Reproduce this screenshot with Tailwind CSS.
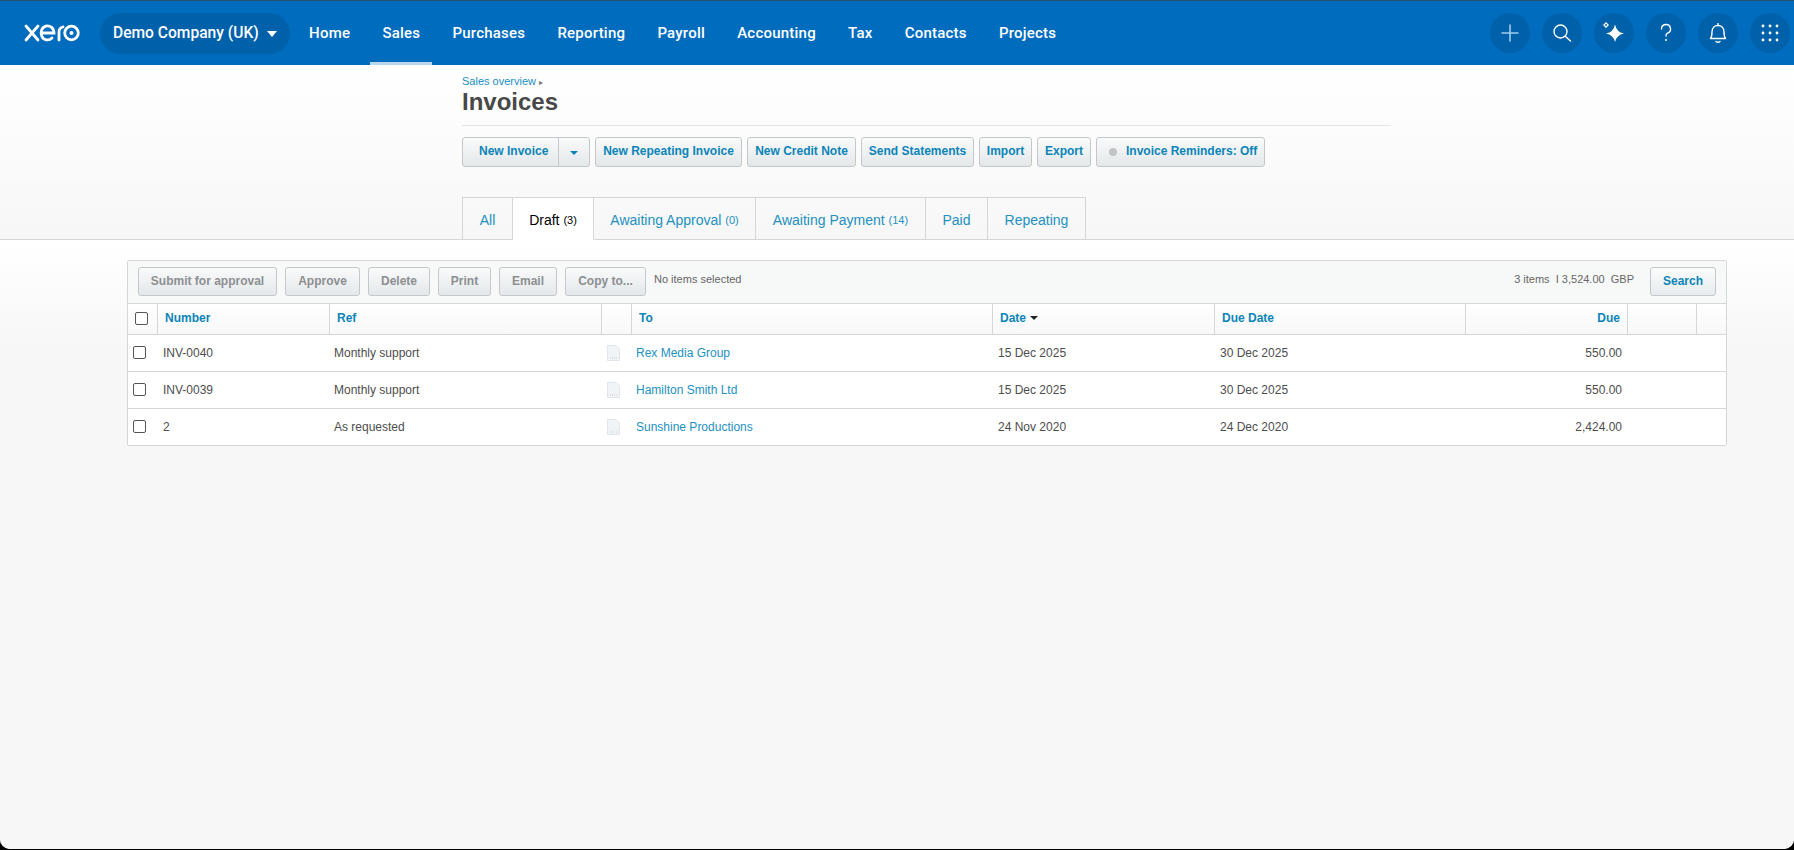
<!DOCTYPE html>
<html lang="en">
  <head>
    <meta charset="UTF-8" />
    <title>Invoices</title>
    <script src="https://cdn.jsdelivr.net/npm/@tailwindcss/browser@4"></script>
  </head>
  <body class="bg-black font-['Liberation_Sans',Arial,sans-serif] text-[#444]">
    <div class="h-[849px] w-[1794px] overflow-hidden rounded-b-[10px] bg-[#f7f7f7] flex flex-col">
      <!-- top nav -->
      <header class="h-[65px] shrink-0 bg-[#006cbe] border-t border-[#2d4f70] flex items-center pl-[24px] pr-[4px] text-white font-['Roboto',sans-serif]">
        <svg class="w-[56px] h-[22px] shrink-0" viewBox="0 0 56 22" fill="none" stroke="white" stroke-width="2.800" stroke-linecap="round">
          <path d="M2 4 L14 18 M14 4 L2 18" />
          <path d="M18 11 H30 A6.500 7 0 1 0 28 16" />
          <path d="M35 18 V10 A5 5 0 0 1 39 5" />
          <circle cx="47.500" cy="11" r="6.800" />
          <circle cx="47.500" cy="11" r="2" fill="white" stroke="none" />
        </svg>
        <div class="ml-[20px] h-[41px] w-[190px] shrink-0 rounded-full bg-[#0061ab] flex items-center pl-[13px] pt-[1px] text-[15.600px] font-medium">
          Demo Company (UK)
          <span class="ml-[8px] w-0 h-0 border-x-[5.500px] border-x-transparent border-t-[6px] border-t-white"></span>
        </div>
        <nav class="ml-[3px] flex h-full text-[15px] font-medium tracking-[0.22px]">
          <a class="px-[16.100px] pt-[1px] flex items-center">Home</a>
          <a class="relative px-[16.100px] pt-[1px] flex items-center">Sales<span class="absolute left-[4px] right-[4px] bottom-0 h-[3px] bg-[#b9d7ef]"></span></a>
          <a class="px-[16.100px] pt-[1px] flex items-center">Purchases</a>
          <a class="px-[16.100px] pt-[1px] flex items-center">Reporting</a>
          <a class="px-[16.100px] pt-[1px] flex items-center">Payroll</a>
          <a class="px-[16.100px] pt-[1px] flex items-center">Accounting</a>
          <a class="px-[16.100px] pt-[1px] flex items-center">Tax</a>
          <a class="px-[16.100px] pt-[1px] flex items-center">Contacts</a>
          <a class="px-[16.100px] pt-[1px] flex items-center">Projects</a>
        </nav>
        <div class="ml-auto flex gap-[12px]">
          <span class="w-[40px] h-[40px] rounded-full bg-[#0061ab] flex items-center justify-center">
            <svg class="w-[20px] h-[20px]" viewBox="0 0 20 20" stroke="#9fcaea" stroke-width="1.600"><path d="M10 1.500V18.500M1.500 10H18.500" /></svg>
          </span>
          <span class="w-[40px] h-[40px] rounded-full bg-[#0061ab] flex items-center justify-center">
            <svg class="w-[20px] h-[20px]" viewBox="0 0 20 20" fill="none" stroke="white" stroke-width="1.400"><circle cx="8.500" cy="8.500" r="6.500" /><path d="M13.200 13.200L18.500 18" stroke-linecap="round" /></svg>
          </span>
          <span class="w-[40px] h-[40px] rounded-full bg-[#0061ab] flex items-center justify-center">
            <svg class="w-[24px] h-[24px]" viewBox="0 0 24 24" fill="white"><path d="M13 3.500 Q14.500 11 22 12.500 Q14.500 14 13 21 Q11.500 14 4 12.500 Q11.500 11 13 3.500Z" /><path d="M4 1L7 4L4 7L1 4Z M4 2.800L2.800 4L4 5.200L5.200 4Z" fill-rule="evenodd" /></svg>
          </span>
          <span class="w-[40px] h-[40px] rounded-full bg-[#0061ab] flex items-center justify-center">
            <svg class="w-[20px] h-[20px]" viewBox="0 0 20 20" fill="none" stroke="white" stroke-width="1.400"><path d="M5.500 6 A4.500 4.500 0 1 1 11.500 10.200 C10.300 10.800 10 11.500 10 13" stroke-linecap="round" /><circle cx="10" cy="17" r="1" fill="white" stroke="none" /></svg>
          </span>
          <span class="w-[40px] h-[40px] rounded-full bg-[#0061ab] flex items-center justify-center">
            <svg class="w-[20px] h-[22px]" viewBox="0 0 20 22" fill="none" stroke="white" stroke-width="1.400"><path d="M2.500 16.500 C3.800 15 4 13.500 4 10 C4 6 6.500 3.500 10 3.500 C13.500 3.500 16 6 16 10 C16 13.500 16.200 15 17.500 16.500Z" stroke-linejoin="round" /><path d="M10 1V3.500" /><path d="M8 19.500 Q10 21 12 19.500" stroke-linecap="round" /></svg>
          </span>
          <span class="w-[40px] h-[40px] rounded-full bg-[#0061ab] flex items-center justify-center">
            <svg class="w-[18px] h-[18px]" viewBox="0 0 18 18" fill="white"><circle cx="2" cy="2" r="1.400" /><circle cx="9" cy="2" r="1.400" /><circle cx="16" cy="2" r="1.400" /><circle cx="2" cy="9" r="1.400" /><circle cx="9" cy="9" r="1.400" /><circle cx="16" cy="9" r="1.400" /><circle cx="2" cy="16" r="1.400" /><circle cx="9" cy="16" r="1.400" /><circle cx="16" cy="16" r="1.400" /></svg>
          </span>
        </div>
      </header>

      <!-- page title, actions, tabs -->
      <section class="h-[175px] shrink-0 bg-gradient-to-b from-white to-[#f7f7f7] border-b border-[#d4d6d7] pl-[462px] flex flex-col">
        <div class="w-[929px] border-b border-[#e3e4e4] h-[61px] pt-[10px]">
          <p class="text-[11px] leading-[13px] text-[#1a8fc0]">Sales overview <span class="text-[8px] text-[#777]">&#9656;</span></p>
          <h1 class="text-[24px] leading-[26px] font-bold text-[#484848]">Invoices</h1>
        </div>
        <div class="mt-[11px] flex gap-[5px] text-[12px] font-bold text-[#0b84b8]">
          <div class="h-[30px] w-[128px] flex rounded-[3px] border border-[#c4c8ca] bg-gradient-to-b from-[#f9fafa] to-[#e4e8ea]">
            <span class="w-[96px] pl-[16px] pb-[2px] flex items-center border-r border-[#c4c8ca]">New Invoice</span>
            <span class="flex-1 flex items-center justify-center"><span class="w-0 h-0 border-x-[4px] border-x-transparent border-t-[4px] border-t-[#0b84b8] mt-[2px]"></span></span>
          </div>
          <a class="h-[30px] w-[147px] pb-[2px] flex items-center justify-center rounded-[3px] border border-[#c4c8ca] bg-gradient-to-b from-[#f9fafa] to-[#e4e8ea]">New Repeating Invoice</a>
          <a class="h-[30px] w-[109px] pb-[2px] flex items-center justify-center rounded-[3px] border border-[#c4c8ca] bg-gradient-to-b from-[#f9fafa] to-[#e4e8ea]">New Credit Note</a>
          <a class="h-[30px] w-[113px] pb-[2px] flex items-center justify-center rounded-[3px] border border-[#c4c8ca] bg-gradient-to-b from-[#f9fafa] to-[#e4e8ea]">Send Statements</a>
          <a class="h-[30px] w-[53px] pb-[2px] flex items-center justify-center rounded-[3px] border border-[#c4c8ca] bg-gradient-to-b from-[#f9fafa] to-[#e4e8ea]">Import</a>
          <a class="h-[30px] w-[54px] pb-[2px] flex items-center justify-center rounded-[3px] border border-[#c4c8ca] bg-gradient-to-b from-[#f9fafa] to-[#e4e8ea]">Export</a>
          <a class="h-[30px] w-[169px] pb-[2px] flex items-center rounded-[3px] border border-[#c4c8ca] bg-gradient-to-b from-[#f9fafa] to-[#e4e8ea] pl-[12px]"><span class="w-[8px] h-[8px] mt-[2px] rounded-full bg-[#c2c4c5] mr-[9px]"></span>Invoice Reminders: Off</a>
        </div>
        <div class="mt-[30px] flex h-[43px] text-[14px] text-[#2390bf] -mb-px">
          <a class="w-[51px] pt-[3px] flex items-center justify-center border border-[#d4d6d7]">All</a>
          <a class="w-[81px] pt-[3px] flex items-center justify-center border border-l-0 border-[#d4d6d7] border-b-white bg-white text-black">Draft&nbsp;<span class="text-[11px]">(3)</span></a>
          <a class="w-[162px] pt-[3px] flex items-center justify-center border border-l-0 border-[#d4d6d7]">Awaiting Approval&nbsp;<span class="text-[11px]">(0)</span></a>
          <a class="w-[170px] pt-[3px] flex items-center justify-center border border-l-0 border-[#d4d6d7]">Awaiting Payment&nbsp;<span class="text-[11px]">(14)</span></a>
          <a class="w-[62px] pt-[3px] flex items-center justify-center border border-l-0 border-[#d4d6d7]">Paid</a>
          <a class="w-[98px] pt-[3px] flex items-center justify-center border border-l-0 border-[#d4d6d7]">Repeating</a>
        </div>
      </section>

      <!-- invoice list -->
      <main class="flex-1 bg-[linear-gradient(to_bottom,#ffffff,#f7f7f7_110px)] pt-[20px] pl-[127px]">
        <div class="w-[1600px] border border-[#d4d6d7] rounded-[2px] text-[12px] text-[#4d4d4d]">
          <div class="h-[43px] bg-[#f7f8f8] border-b border-[#d4d6d7] flex items-start pt-[6px] pl-[10px] pr-[10px] gap-[8px] text-[12px] font-bold text-[#8c8f91]">
            <a class="h-[29px] w-[139px] pb-[1px] flex items-center justify-center rounded-[3px] border border-[#c4c8ca] bg-gradient-to-b from-[#f9fafa] to-[#e4e8ea]">Submit for approval</a>
            <a class="h-[29px] w-[75px] pb-[1px] flex items-center justify-center rounded-[3px] border border-[#c4c8ca] bg-gradient-to-b from-[#f9fafa] to-[#e4e8ea]">Approve</a>
            <a class="h-[29px] w-[62px] pb-[1px] flex items-center justify-center rounded-[3px] border border-[#c4c8ca] bg-gradient-to-b from-[#f9fafa] to-[#e4e8ea]">Delete</a>
            <a class="h-[29px] w-[53px] pb-[1px] flex items-center justify-center rounded-[3px] border border-[#c4c8ca] bg-gradient-to-b from-[#f9fafa] to-[#e4e8ea]">Print</a>
            <a class="h-[29px] w-[58px] pb-[1px] flex items-center justify-center rounded-[3px] border border-[#c4c8ca] bg-gradient-to-b from-[#f9fafa] to-[#e4e8ea]">Email</a>
            <a class="h-[29px] w-[81px] pb-[1px] flex items-center justify-center rounded-[3px] border border-[#c4c8ca] bg-gradient-to-b from-[#f9fafa] to-[#e4e8ea]">Copy to...</a>
            <span class="h-[24px] flex items-center text-[11px] font-normal text-[#666]">No items selected</span>
            <span class="ml-auto h-[24px] flex items-center text-[11px] font-normal text-[#666] whitespace-pre mr-[8px]">3 items  I 3,524.00  GBP</span>
            <a class="h-[29px] w-[66px] pb-[1px] flex items-center justify-center rounded-[3px] border border-[#c4c8ca] bg-gradient-to-b from-[#fbfcfc] to-[#e6ebed] text-[#0b84b8]">Search</a>
          </div>
          <div class="grid grid-cols-[30px_172px_272px_30px_361px_222px_251px_162px_69px_29px] h-[31px] bg-gradient-to-b from-white to-[#f8f8f8] border-b border-[#d4d6d7] font-bold text-[#0b84b8]">
            <div class="border-r border-[#d4d6d7] flex items-center pl-[7px]"><input type="checkbox" class="appearance-none -mt-[1px] w-[13px] h-[13px] border border-[#555] rounded-[2px] bg-white" /></div>
            <div class="border-r border-[#d4d6d7] flex items-center pl-[7px] pb-[2px]">Number</div>
            <div class="border-r border-[#d4d6d7] flex items-center pl-[7px] pb-[2px]">Ref</div>
            <div class="border-r border-[#d4d6d7]"></div>
            <div class="border-r border-[#d4d6d7] flex items-center pl-[7px] pb-[2px]">To</div>
            <div class="border-r border-[#d4d6d7] flex items-center pl-[7px] pb-[2px]">Date<span class="ml-[4px] w-0 h-0 border-x-[4px] border-x-transparent border-t-[4px] border-t-[#222]"></span></div>
            <div class="border-r border-[#d4d6d7] flex items-center pl-[7px] pb-[2px]">Due Date</div>
            <div class="border-r border-[#d4d6d7] flex items-center justify-end pr-[7px] pb-[2px]">Due</div>
            <div class="border-r border-[#d4d6d7]"></div>
            <div></div>
          </div>
          <div class="grid grid-cols-[30px_172px_272px_30px_361px_222px_251px_162px_69px_29px] h-[37px] items-center bg-white border-b border-[#d4d6d7]">
            <div class="flex pl-[5px]"><input type="checkbox" class="appearance-none -mt-[1px] w-[13px] h-[13px] border border-[#555] rounded-[2px] bg-white" /></div>
            <div class="pl-[5px]">INV-0040</div>
            <div class="pl-[4px]">Monthly support</div>
            <div class="pl-[5px]"><svg class="w-[13px] h-[16px]" viewBox="0 0 13 16"><path d="M0.500 0.500H9L12.500 4V15.500H0.500Z" fill="#f1f4f7" stroke="#dfe5ea" /><path d="M3 13H10" stroke="#c9ced3" stroke-dasharray="1 1" /></svg></div>
            <div class="pl-[4px] text-[#2390bf]">Rex Media Group</div>
            <div class="pl-[5px]">15 Dec 2025</div>
            <div class="pl-[5px]">30 Dec 2025</div>
            <div class="text-right pr-[6px]">550.00</div>
            <div></div>
            <div></div>
          </div>
          <div class="grid grid-cols-[30px_172px_272px_30px_361px_222px_251px_162px_69px_29px] h-[37px] items-center bg-white border-b border-[#d4d6d7]">
            <div class="flex pl-[5px]"><input type="checkbox" class="appearance-none -mt-[1px] w-[13px] h-[13px] border border-[#555] rounded-[2px] bg-white" /></div>
            <div class="pl-[5px]">INV-0039</div>
            <div class="pl-[4px]">Monthly support</div>
            <div class="pl-[5px]"><svg class="w-[13px] h-[16px]" viewBox="0 0 13 16"><path d="M0.500 0.500H9L12.500 4V15.500H0.500Z" fill="#f1f4f7" stroke="#dfe5ea" /><path d="M3 13H10" stroke="#c9ced3" stroke-dasharray="1 1" /></svg></div>
            <div class="pl-[4px] text-[#2390bf]">Hamilton Smith Ltd</div>
            <div class="pl-[5px]">15 Dec 2025</div>
            <div class="pl-[5px]">30 Dec 2025</div>
            <div class="text-right pr-[6px]">550.00</div>
            <div></div>
            <div></div>
          </div>
          <div class="grid grid-cols-[30px_172px_272px_30px_361px_222px_251px_162px_69px_29px] h-[36px] items-center bg-white">
            <div class="flex pl-[5px]"><input type="checkbox" class="appearance-none -mt-[1px] w-[13px] h-[13px] border border-[#555] rounded-[2px] bg-white" /></div>
            <div class="pl-[5px]">2</div>
            <div class="pl-[4px]">As requested</div>
            <div class="pl-[5px]"><svg class="w-[13px] h-[16px]" viewBox="0 0 13 16"><path d="M0.500 0.500H9L12.500 4V15.500H0.500Z" fill="#f1f4f7" stroke="#dfe5ea" /><path d="M3 13H10" stroke="#c9ced3" stroke-dasharray="1 1" /></svg></div>
            <div class="pl-[4px] text-[#2390bf]">Sunshine Productions</div>
            <div class="pl-[5px]">24 Nov 2020</div>
            <div class="pl-[5px]">24 Dec 2020</div>
            <div class="text-right pr-[6px]">2,424.00</div>
            <div></div>
            <div></div>
          </div>
        </div>
      </main>
    </div>
  </body>
</html>
